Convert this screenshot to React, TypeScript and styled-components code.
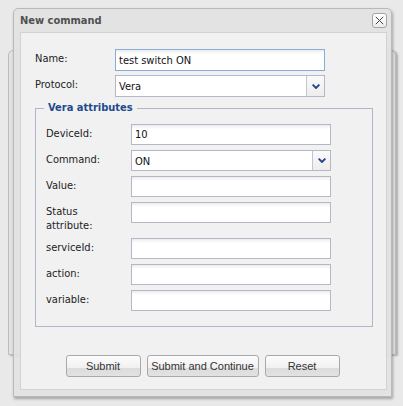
import styled, { createGlobalStyle } from "styled-components";

const GlobalStyle = createGlobalStyle`
  html, body {
    margin: 0;
    padding: 0;
    background: #e9e9e9;
  }
`;

const Desktop = styled.div`
  position: relative;
  width: 403px;
  height: 406px;
  overflow: hidden;
  background: #e9e9e9;
  font-family: "DejaVu Sans Condensed", "Liberation Sans", sans-serif;
  font-size: 11px;
  color: #222;
`;

const BackWindow = styled.div`
  position: absolute;
  left: 8px;
  top: 50px;
  width: 386px;
  height: 303px;
  border: 1px solid #bdbdbd;
  border-radius: 5px 5px 0 0;
  background: #e2e2e2;
  box-shadow: 2px 1px 2px rgba(0, 0, 0, 0.25);
`;

const Dialog = styled.div`
  position: absolute;
  left: 13px;
  top: 8px;
  width: 367px;
  border: 1px solid #b9b9b9;
  border-radius: 5px 5px 0 0;
  background: rgba(226, 226, 226, 0.92);
  box-shadow: 1px 2px 3px rgba(0, 0, 0, 0.3);
  padding: 0 4px 6px 6px;
  display: flex;
  flex-direction: column;
`;

const TitleBar = styled.div`
  height: 23px;
  display: flex;
  align-items: center;
  justify-content: space-between;
`;

const Title = styled.span`
  font-weight: bold;
  color: #505050;
  font-size: 11px;
`;

const CloseButton = styled.button`
  width: 15px;
  height: 15px;
  padding: 0;
  margin: 0;
  display: flex;
  align-items: center;
  justify-content: center;
  border: 1px solid #a4a4a4;
  border-radius: 3px;
  background: linear-gradient(#ffffff, #ececec);
  cursor: pointer;
`;

const Content = styled.div`
  background: #f1f1f1;
  border: 1px solid #d2d2d2;
  padding: 16px 14px 12px 14px;
  display: flex;
  flex-direction: column;
`;

const Rows = styled.div<{ $gap: number }>`
  display: flex;
  flex-direction: column;
  gap: ${(p) => p.$gap}px;
`;

const Row = styled.div`
  display: flex;
  align-items: flex-start;
`;

const Label = styled.label<{ $width: number }>`
  box-sizing: border-box;
  width: ${(p) => p.$width}px;
  flex: none;
  padding: 3px 8px 0 0;
  line-height: 14px;
  color: #222;
`;

const TextInput = styled.input<{ $width: number; $height: number; $focused?: boolean }>`
  box-sizing: border-box;
  width: ${(p) => p.$width}px;
  height: ${(p) => p.$height}px;
  margin: 0;
  padding: 0 3px;
  border: 1px solid ${(p) => (p.$focused ? "#86acd8" : "#b6b6c6")};
  background: linear-gradient(#ececec, #ffffff 4px);
  font-family: "DejaVu Sans Condensed", "Liberation Sans", sans-serif;
  font-size: 11px;
  color: #111;
  outline: none;
`;

const SelectBox = styled.div<{ $width: number; $height: number }>`
  box-sizing: border-box;
  width: ${(p) => p.$width}px;
  height: ${(p) => p.$height}px;
  display: flex;
  border: 1px solid #b6b6c6;
  background: #fff;
`;

const SelectValue = styled.span`
  flex: 1;
  display: flex;
  align-items: center;
  padding: 1px 3px 0 3px;
  color: #111;
`;

const SelectTrigger = styled.span`
  width: 17px;
  flex: none;
  display: flex;
  align-items: center;
  justify-content: center;
  border-left: 1px solid #c4c4cc;
  background: linear-gradient(#fafafa, #ededed);
`;

const Fieldset = styled.fieldset`
  margin: 4px 0 0 0;
  width: 338px;
  box-sizing: border-box;
  border: 1px solid #b4b4c8;
  padding: 9px 10px 15px 10px;
  min-inline-size: 0;
`;

const Legend = styled.legend`
  padding: 0 4px;
  margin-left: -2px;
  font-weight: bold;
  color: #1f4a8e;
  line-height: 14px;
`;

const ButtonBar = styled.div`
  display: flex;
  justify-content: center;
  gap: 6px;
  margin-top: 28px;
  padding-right: 2px;
`;

const Button = styled.button<{ $width: number }>`
  width: ${(p) => p.$width}px;
  height: 22px;
  padding: 0;
  border: 1px solid #a9a9a9;
  border-radius: 3px;
  background: linear-gradient(#fcfcfc 0%, #f1f1f1 58%, #dcdcdc 60%, #e2e2e2 100%);
  font-family: "Liberation Sans", Arial, sans-serif;
  font-size: 11px;
  color: #333;
  cursor: pointer;
`;

function Chevron() {
  return (
    <svg width="8" height="5" viewBox="0 0 8 5">
      <path d="M0.6 0.6 L4 4 L7.4 0.6" fill="none" stroke="#24468a" strokeWidth="1.9" />
    </svg>
  );
}

function Select({ value, width, height }: { value: string; width: number; height: number }) {
  return (
    <SelectBox $width={width} $height={height}>
      <SelectValue>{value}</SelectValue>
      <SelectTrigger>
        <Chevron />
      </SelectTrigger>
    </SelectBox>
  );
}

const attributes: { label: string; value?: string; select?: boolean }[] = [
  { label: "DeviceId:", value: "10" },
  { label: "Command:", value: "ON", select: true },
  { label: "Value:" },
  { label: "Status attribute:" },
  { label: "serviceId:" },
  { label: "action:" },
  { label: "variable:" },
];

export default function App() {
  return (
    <Desktop>
      <GlobalStyle />
      <BackWindow />
      <Dialog>
        <TitleBar>
          <Title>New command</Title>
          <CloseButton aria-label="Close">
            <svg width="9" height="9" viewBox="0 0 9 9">
              <path d="M0.8 0.8 L8.2 8.2 M8.2 0.8 L0.8 8.2" stroke="#444" strokeWidth="1" />
            </svg>
          </CloseButton>
        </TitleBar>
        <Content>
          <Rows $gap={4}>
            <Row>
              <Label $width={80}>Name:</Label>
              <TextInput $width={210} $height={22} $focused defaultValue="test switch ON" />
            </Row>
            <Row>
              <Label $width={80}>Protocol:</Label>
              <Select value="Vera" width={210} height={22} />
            </Row>
          </Rows>
          <Fieldset>
            <Legend>Vera attributes</Legend>
            <Rows $gap={5}>
              {attributes.map((a) => (
                <Row key={a.label}>
                  <Label $width={85}>{a.label}</Label>
                  {a.select ? (
                    <Select value={a.value ?? ""} width={200} height={21} />
                  ) : (
                    <TextInput $width={200} $height={21} defaultValue={a.value ?? ""} />
                  )}
                </Row>
              ))}
            </Rows>
          </Fieldset>
          <ButtonBar>
            <Button $width={75}>Submit</Button>
            <Button $width={112}>Submit and Continue</Button>
            <Button $width={75}>Reset</Button>
          </ButtonBar>
        </Content>
      </Dialog>
    </Desktop>
  );
}
